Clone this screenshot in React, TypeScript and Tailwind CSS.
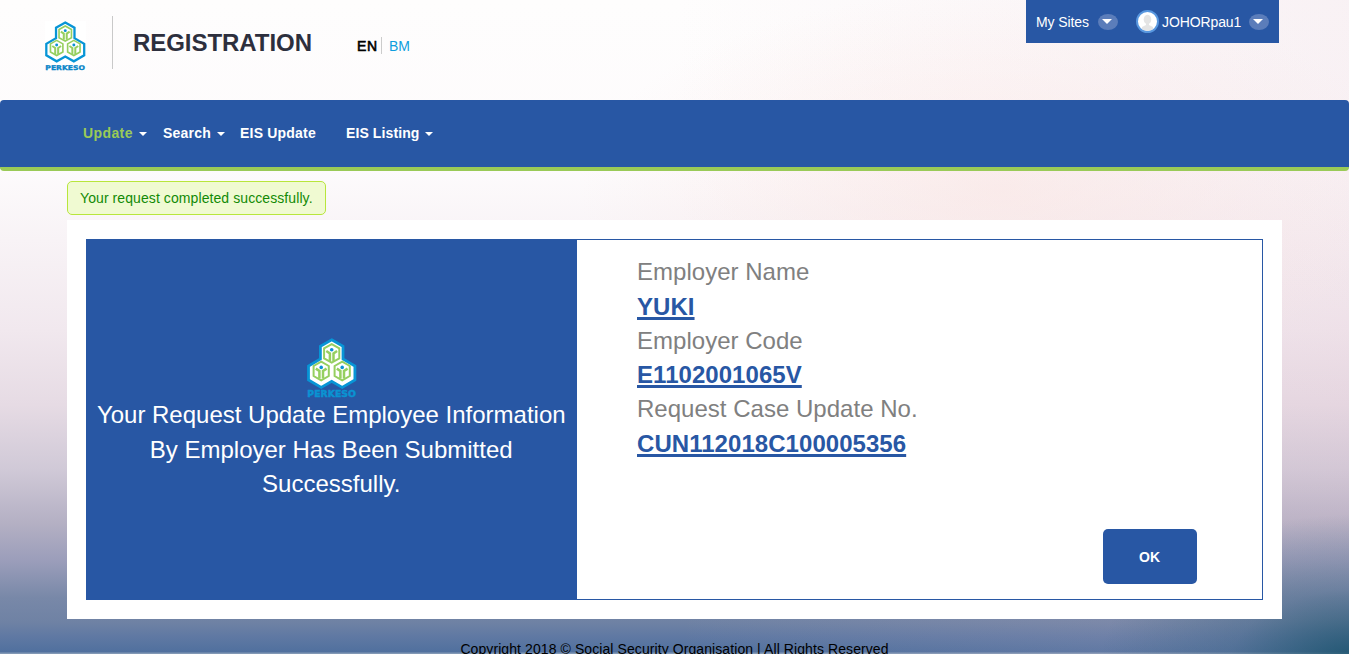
function Cell({ x, y }: { x: number; y: number }) {
  return (
    <g transform={`translate(${x} ${y})`} fill="none" stroke="#96cf60">
      <path d="M0 -9.3L7.6 -5V5L0 9.3L-7.6 5V-5Z" strokeWidth="2" />
      <path d="M-5.4 -2.4L-1.8 0V7.5M5.4 -2.4L1.8 0V7.5" strokeWidth="2.5" />
      <circle cx="0" cy="-3.6" r="1.8" fill="#0b93d3" stroke="none" />
    </g>
  );
}

function Logo({ className, wordmark }: { className: string; wordmark: string }) {
  return (
    <svg className={className} viewBox="0 0 50 60" overflow="visible">
      <path
        d="M24.7 1.8L36 8.2V21L47.9 28V42L35.2 49.4L24.7 43.4L14.2 49.4L1.5 42V28L13.4 21V8.2Z"
        fill="#fff"
        stroke="#0795d6"
        strokeWidth="2.8"
      />
      <Cell x={24.7} y={15.4} />
      <Cell x={14.2} y={33} />
      <Cell x={35.2} y={33} />
      <text
        x="0.3"
        y="59.4"
        fontSize="8"
        fontWeight="700"
        fontFamily="DejaVu Sans, sans-serif"
        fill={wordmark}
        stroke={wordmark}
        strokeWidth="0.4"
        textLength="48.6"
        lengthAdjust="spacingAndGlyphs"
      >
        PERKESO
      </text>
    </svg>
  );
}

function Caret({ className = "" }: { className?: string }) {
  return (
    <span
      className={`h-0 w-0 border-x-4 border-t-4 border-x-transparent border-t-white ${className}`}
    />
  );
}

function OvalCaret() {
  return (
    <span className="flex h-4 w-5 items-center justify-center rounded-[50%] bg-[#5b7dba]">
      <span className="-ml-[3px] h-0 w-0 border-x-[5px] border-t-[5px] border-x-transparent border-t-white" />
    </span>
  );
}

const details = [
  { label: "Employer Name", value: "YUKI" },
  { label: "Employer Code", value: "E1102001065V" },
  { label: "Request Case Update No.", value: "CUN112018C100005356" },
];

export default function App() {
  return (
    <div className="h-[654px] w-full overflow-hidden bg-[radial-gradient(ellipse_260px_150px_at_1360px_664px,rgba(20,80,105,0.9),rgba(40,90,125,0.35)_50%,transparent),radial-gradient(ellipse_420px_200px_at_1000px_190px,rgba(250,226,222,0.5),transparent),linear-gradient(to_right,transparent_50%,rgba(225,190,205,0.18)_100%),linear-gradient(to_bottom,#fefdfd_0px,#fdfbfc_170px,#f8f3f6_240px,#f1e8ee_330px,#e6dbe4_405px,#d0c9d7_470px,#b3afc3_525px,#9a9dba_562px,#7888a8_598px,#6f82a4_622px,#6079a3_636px,#50709e_652px,#8298b5_653px)] font-['Liberation_Sans',Arial,sans-serif]">
      <header className="flex h-[100px] items-start">
        <Logo className="mt-[20.5px] ml-[45px] h-[49px] w-[41px] bg-white" wordmark="#0a86c8" />
        <div className="mt-4 ml-[26px] h-[53px] w-px bg-[#c9c9c9]" />
        <h1 className="mt-[25px] ml-5 w-[224px] text-[24px] leading-9 font-bold tracking-[-0.05px] text-[#2d2f3d]">REGISTRATION</h1>
        <div className="mt-[37px] flex h-[17px] items-center text-[14px]">
          <span className="w-6 pt-px font-normal tracking-[0.7px] text-black [-webkit-text-stroke:0.6px_black]">EN</span>
          <span className="h-[17px] w-px bg-[#cccccc]" />
          <a className="ml-[7px] pt-px text-[#0e9ede]">BM</a>
        </div>
        <div className="mr-[70px] ml-auto flex h-[43px] w-[253px] items-center bg-[#2857a4] pl-[10px] text-[14px] text-white">
          <span className="w-[62px] pt-px tracking-[-0.1px] whitespace-nowrap">My Sites</span>
          <OvalCaret />
          <span className="ml-[18px] flex h-[23px] w-[23px] items-center justify-center overflow-hidden rounded-full border-2 border-[#5897df] bg-white">
            <svg viewBox="0 0 19 19" className="h-[19px] w-[19px]" fill="#e4e4e4">
              <ellipse cx="9.5" cy="7.5" rx="3.8" ry="4.7" />
              <path d="M8 10H11V13L15 15V19H4V15L8 13Z" />
            </svg>
          </span>
          <span className="ml-[3px] w-[87px] pt-px tracking-[-0.1px] whitespace-nowrap">JOHORpau1</span>
          <OvalCaret />
        </div>
      </header>

      <nav className="flex h-[71px] items-center rounded-[4px] border-b-4 border-[#9aca57] bg-[#2857a4] pl-[83px] text-[14px] font-bold tracking-[0.2px] text-white">
        <a className="flex w-20 items-center tracking-[0.4px] text-[#9aca57]">
          Update
          <Caret className="ml-[6px]" />
        </a>
        <a className="flex w-[77px] items-center">
          Search
          <Caret className="ml-[6px]" />
        </a>
        <a className="w-[106px]">EIS Update</a>
        <a className="flex items-center tracking-[0.1px]">
          EIS Listing
          <Caret className="ml-[6px]" />
        </a>
      </nav>

      <main className="mx-[67px] pt-[10px]">
        <div className="flex h-[34px] w-[259px] items-center rounded-[5px] border border-[#b8e63c] bg-[#f0fad2] pl-3 text-[14px] tracking-[0.085px] whitespace-nowrap text-[#128a05]">
          Your request completed successfully.
        </div>
        <section className="mt-[5px] h-[399px] bg-white px-[19px] py-[19px]">
          <div className="flex h-[361px] w-[1177px] border border-[#2857a4]">
            <div className="flex w-[490px] shrink-0 flex-col items-center bg-[#2857a4] pt-[98px] text-center text-[24px] leading-[34.6px] text-white">
              <Logo className="h-[60px] w-[50px]" wordmark="#0a93d2" />
              <p className="-ml-[1.5px] whitespace-nowrap">
                Your Request Update Employee Information
                <br />
                By Employer Has Been Submitted
                <br />
                Successfully.
              </p>
            </div>
            <div className="flex flex-1 flex-col pt-[15px] pr-[65px] pl-[60px]">
              <dl className="text-[24px] leading-[34.3px]">
                {details.map((item) => (
                  <div key={item.label}>
                    <dt className="tracking-[0.02px] text-[#808080]">{item.label}</dt>
                    <dd className="-mb-[0.6px] pt-[0.6px] font-bold tracking-[0.05px] text-[#2857a4] underline decoration-[3px] underline-offset-[2px]">
                      {item.value}
                    </dd>
                  </div>
                ))}
              </dl>
              <button className="mt-auto mb-[15px] h-[55px] w-[94px] self-end rounded-[5px] bg-[#2857a4] pt-[2px] pr-px text-[14px] font-bold text-white">
                OK
              </button>
            </div>
          </div>
        </section>
      </main>

      <footer className="pt-5 text-center text-[14px] leading-5 tracking-[0.085px] text-black">
        Copyright 2018 © Social Security Organisation | All Rights Reserved
      </footer>
    </div>
  );
}
